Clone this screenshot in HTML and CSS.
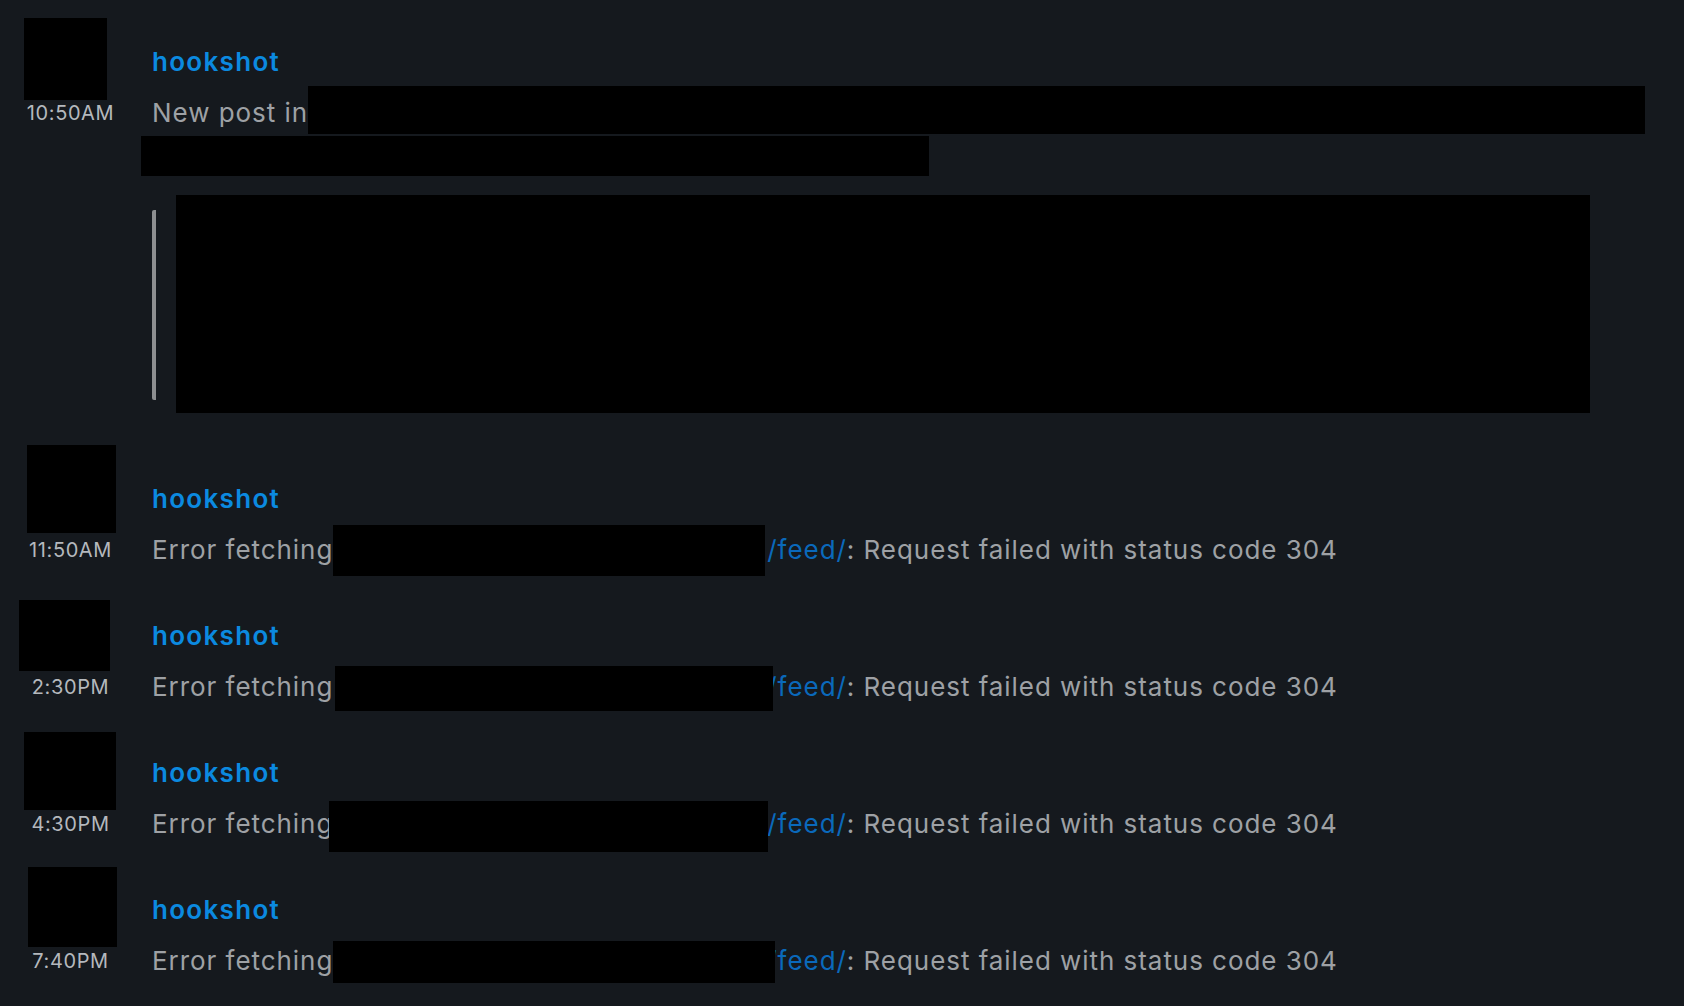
FILE: index.html
```html
<!DOCTYPE html>
<html lang="en">
<head>
<meta charset="utf-8">
<title>hookshot</title>
<link rel="stylesheet" href="styles.css">
</head>
<body>
<main class="timeline">

  <article class="msg">
    <div class="avatar av1"></div>
    <div class="ts">10:50AM</div>
    <div class="name">hookshot</div>
    <div class="line">
      <span class="txt">New post in</span>
      <span class="redact r1a"></span>
    </div>
    <div class="extra">
      <div class="redact r1b"></div>
      <blockquote class="quote"><div class="redact r1c"></div></blockquote>
    </div>
  </article>

  <article class="msg">
    <div class="avatar av2"></div>
    <div class="ts">11:50AM</div>
    <div class="name">hookshot</div>
    <div class="line">
      <span class="txt">Error fetching</span>
      <span class="redact r2"></span>
      <a class="link">/feed/</a>
      <span class="txt">: Request failed with status code 304</span>
    </div>
  </article>

  <article class="msg">
    <div class="avatar av3"></div>
    <div class="ts">2:30PM</div>
    <div class="name">hookshot</div>
    <div class="line">
      <span class="txt">Error fetching</span>
      <span class="redact r3"></span>
      <a class="link">/feed/</a>
      <span class="txt">: Request failed with status code 304</span>
    </div>
  </article>

  <article class="msg">
    <div class="avatar av4"></div>
    <div class="ts">4:30PM</div>
    <div class="name">hookshot</div>
    <div class="line">
      <span class="txt">Error fetching</span>
      <span class="redact r4"></span>
      <a class="link">/feed/</a>
      <span class="txt">: Request failed with status code 304</span>
    </div>
  </article>

  <article class="msg">
    <div class="avatar av5"></div>
    <div class="ts">7:40PM</div>
    <div class="name">hookshot</div>
    <div class="line">
      <span class="txt">Error fetching</span>
      <span class="redact r5"></span>
      <a class="link">/feed/</a>
      <span class="txt">: Request failed with status code 304</span>
    </div>
  </article>

</main>
</body>
</html>
```

FILE: styles.css
```css
html, body {
  margin: 0;
  padding: 0;
  background: #15191e;
}

body {
  font-family: Inter, "Noto Sans", "Liberation Sans", sans-serif;
  width: 1684px;
  height: 1006px;
  overflow: hidden;
}

.timeline {
  padding-top: 18px;
}

.msg {
  display: grid;
  grid-template-columns: 152px 1532px;
  grid-template-rows: 49px 40px auto;
  grid-template-areas:
    "av name"
    "ts body"
    ". extra";
  padding: 26px 0 22px;
}

.avatar {
  grid-area: av;
  align-self: end;
  justify-self: start;
  background: #000;
}
.av1 { width: 83px; height: 82px; margin: 0 0 -7px 24px; }
.av2 { width: 89px; height: 88px; margin: 0 0 -3px 27px; }
.av3 { width: 91px; height: 71px; margin: 0 0 -4px 19px; }
.av4 { width: 92px; height: 78px; margin: 0 0 -6px 24px; }
.av5 { width: 89px; height: 80px; margin: 0 0 -6px 28px; }

.ts {
  grid-area: ts;
  width: 141px;
  text-align: center;
  font-size: 20px;
  letter-spacing: 0.6px;
  line-height: 40px;
  color: #b4b8bd;
}

.name {
  grid-area: name;
  font-size: 26px;
  font-weight: 600;
  letter-spacing: 1.3px;
  line-height: 36px;
  color: #0b8ae0;
}

.line {
  grid-area: body;
  display: flex;
  align-items: flex-start;
  height: 40px;
  font-size: 26px;
  letter-spacing: 0.95px;
  line-height: 40px;
  color: #9ea1a5;
  white-space: pre;
}

.link {
  color: #0a69bb;
}

.extra {
  grid-area: extra;
}

.redact {
  display: block;
  flex: none;
  background: #000;
  position: relative;
  z-index: 1;
}

.r1a { width: 1337px; height: 48px; margin-top: -7px; }
.r1b { width: 788px; height: 40px; margin: 3px 0 0 -11px; }

.quote {
  display: flex;
  margin: 34px 0 33px 0;
  height: 190px;
  border-left: 4px solid #8d8f91;
  border-radius: 2px;
  padding-left: 20px;
}
.r1c { width: 1414px; height: 218px; margin-top: -15px; }

.r2 { width: 432px; height: 51px; margin: -5px 2px 0 0; }
.r3 { width: 438px; height: 45px; margin: -1px -6px 0 2px; }
.r4 { width: 439px; height: 51px; margin: -3px -1px 0 -4px; }
.r5 { width: 442px; height: 42px; margin: 0 -8px 0 0; }
```
